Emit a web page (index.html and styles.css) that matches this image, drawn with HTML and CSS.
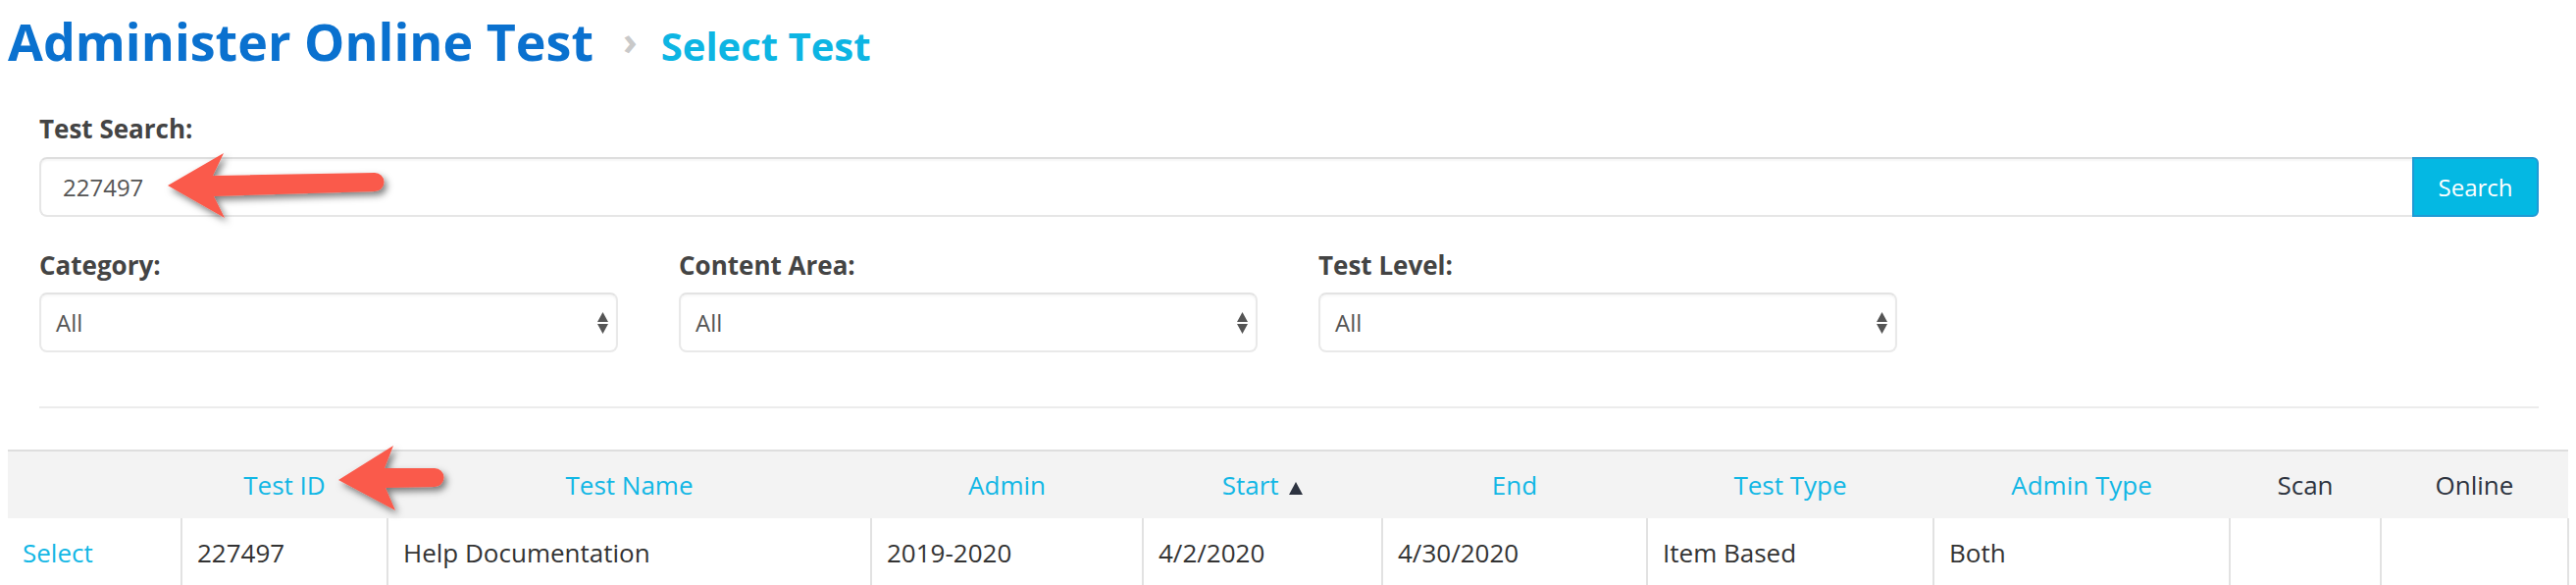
FILE: index.html
```html
<!DOCTYPE html>
<html lang="en">
<head>
<meta charset="utf-8">
<title>Administer Online Test</title>
<link rel="stylesheet" href="styles.css">
</head>
<body>
<div class="page">
  <header class="crumbs">
    <h1 class="crumb-main">Administer Online Test</h1>
    <span class="crumb-sep">&#8250;</span>
    <h2 class="crumb-sub">Select Test</h2>
  </header>

  <section class="filters">
    <label class="field-label">Test Search:</label>
    <div class="search-row">
      <div class="search-input">227497</div>
      <button class="search-btn">Search</button>
    </div>

    <div class="select-row">
      <div class="select-col">
        <label class="field-label">Category:</label>
        <div class="select-box"><span>All</span>
          <svg class="updown" width="11" height="22" viewBox="0 0 11 22"><path d="M5.5 0 L11 10 L0 10 Z M0 12 L11 12 L5.5 22 Z" fill="#555"/></svg>
        </div>
      </div>
      <div class="select-col">
        <label class="field-label">Content Area:</label>
        <div class="select-box"><span>All</span>
          <svg class="updown" width="11" height="22" viewBox="0 0 11 22"><path d="M5.5 0 L11 10 L0 10 Z M0 12 L11 12 L5.5 22 Z" fill="#555"/></svg>
        </div>
      </div>
      <div class="select-col">
        <label class="field-label">Test Level:</label>
        <div class="select-box"><span>All</span>
          <svg class="updown" width="11" height="22" viewBox="0 0 11 22"><path d="M5.5 0 L11 10 L0 10 Z M0 12 L11 12 L5.5 22 Z" fill="#555"/></svg>
        </div>
      </div>
    </div>
    <hr class="divider">
  </section>

  <table class="results">
    <colgroup>
      <col class="c1"><col class="c2"><col class="c3"><col class="c4"><col class="c5">
      <col class="c6"><col class="c7"><col class="c8"><col class="c9"><col class="c10">
    </colgroup>
    <thead>
      <tr>
        <th></th>
        <th class="link">Test ID</th>
        <th class="link">Test Name</th>
        <th class="link">Admin</th>
        <th class="link">Start <svg class="sort" width="14" height="13" viewBox="0 0 14 13"><path d="M7 0 L14 13 L0 13 Z" fill="#2d3340"/></svg></th>
        <th class="link">End</th>
        <th class="link">Test Type</th>
        <th class="link">Admin Type</th>
        <th>Scan</th>
        <th>Online</th>
      </tr>
    </thead>
    <tbody>
      <tr>
        <td class="link">Select</td>
        <td>227497</td>
        <td>Help Documentation</td>
        <td>2019-2020</td>
        <td>4/2/2020</td>
        <td>4/30/2020</td>
        <td>Item Based</td>
        <td>Both</td>
        <td></td>
        <td></td>
      </tr>
    </tbody>
  </table>
</div>

<svg class="annotations" width="2626" height="596" viewBox="0 0 2626 596">
  <defs>
    <filter id="sh" x="-20%" y="-30%" width="140%" height="170%">
      <feDropShadow dx="3" dy="4" stdDeviation="3.5" flood-color="#000" flood-opacity="0.5"/>
    </filter>
  </defs>
  <path filter="url(#sh)" fill="#fa5a4b" d="M171 189 L228 156 L217 179 L382 176 A9.5 9.5 0 0 1 382 195 L218 200 L229 222 Z"/>
  <path filter="url(#sh)" fill="#fa5a4b" d="M345 489 L401 454 L392 477 L443 477 A9.5 9.5 0 0 1 443 496 L393 497 L403 520 Z"/>
</svg>
</body>
</html>
```

FILE: styles.css
```css
html, body {
  margin: 0;
  padding: 0;
  background: #fff;
}

body {
  font-family: "Open Sans", "Liberation Sans", sans-serif;
  color: #333;
  width: 2626px;
  height: 596px;
  overflow: hidden;
  position: relative;
}

.page {
  padding: 7px 8px 0 8px;
}

.crumbs {
  display: flex;
  align-items: baseline;
  height: 70px;
}

.crumb-main {
  margin: 0;
  font-size: 52px;
  line-height: 70px;
  font-weight: 700;
  color: #0a71cf;
}

.crumb-sep {
  font-size: 40px;
  font-weight: 700;
  color: #c9c9c9;
  margin: 0 24px 0 30px;
  position: relative;
  top: -6px;
}

.crumb-sub {
  margin: 0;
  font-size: 40px;
  line-height: 70px;
  font-weight: 700;
  color: #0db5e3;
}

.filters {
  padding: 36px 30px 0 32px;
}

.field-label {
  display: block;
  font-size: 26px;
  line-height: 36px;
  font-weight: 700;
  color: #444;
}

.search-row {
  display: flex;
  margin-top: 11px;
  height: 61px;
}

.search-input {
  flex: 1;
  box-sizing: border-box;
  border: 2px solid #e6e6e6;
  border-top-color: #dedede;
  border-right: none;
  border-radius: 8px 0 0 8px;
  box-shadow: inset 0 2px 2px rgba(0,0,0,0.04);
  font-size: 24px;
  color: #555;
  padding: 0 22px;
  display: flex;
  align-items: center;
}

.search-btn {
  width: 129px;
  box-sizing: border-box;
  border: 2px solid #1f9ad4;
  border-radius: 0 6px 6px 0;
  background: #04b8e3;
  color: #fff;
  font-family: "Open Sans", "Liberation Sans", sans-serif;
  font-size: 24px;
  padding: 0;
}

.select-row {
  display: flex;
  gap: 62px;
  margin-top: 31px;
}

.select-col {
  width: 590px;
}

.select-col .field-label {
  margin-bottom: 10px;
}

.select-box {
  box-sizing: border-box;
  height: 61px;
  border: 2px solid #e9e9e9;
  border-top-color: #e3e3e3;
  border-radius: 8px;
  box-shadow: inset 0 2px 2px rgba(0,0,0,0.03);
  display: flex;
  align-items: center;
  justify-content: space-between;
  padding: 0 8px 0 15px;
  font-size: 24px;
  color: #555;
}

.updown {
  display: block;
}

.divider {
  margin: 55px 0 0 0;
  border: none;
  border-top: 2px solid #ececec;
  height: 0;
}

.results {
  margin-top: 42px;
  width: 2610px;
  table-layout: fixed;
  border-collapse: collapse;
  font-size: 26px;
}

.c1 { width: 177px; }
.c2 { width: 210px; }
.c3 { width: 493px; }
.c4 { width: 277px; }
.c5 { width: 244px; }
.c6 { width: 270px; }
.c7 { width: 292px; }
.c8 { width: 302px; }
.c9 { width: 154px; }
.c10 { width: 191px; }

.results thead tr {
  background: #f3f3f3;
  border-top: 2px solid #dedede;
}

.results th {
  height: 68px;
  padding: 0;
  font-weight: 400;
  text-align: center;
  color: #2e3440;
}

.results th.link {
  color: #12b7e5;
}

.sort {
  display: inline-block;
  vertical-align: baseline;
  margin-left: 4px;
}

.results td {
  height: 90px;
  padding: 0 15px;
  border-left: 2px solid #e2e2e2;
  border-right: 2px solid #e2e2e2;
  color: #333;
  vertical-align: middle;
  padding-bottom: 20px;
  box-sizing: border-box;
}

.results td:first-child {
  border-left: none;
}

.results td.link {
  color: #12b7e5;
}

.annotations {
  position: absolute;
  left: 0;
  top: 0;
  pointer-events: none;
}
```
